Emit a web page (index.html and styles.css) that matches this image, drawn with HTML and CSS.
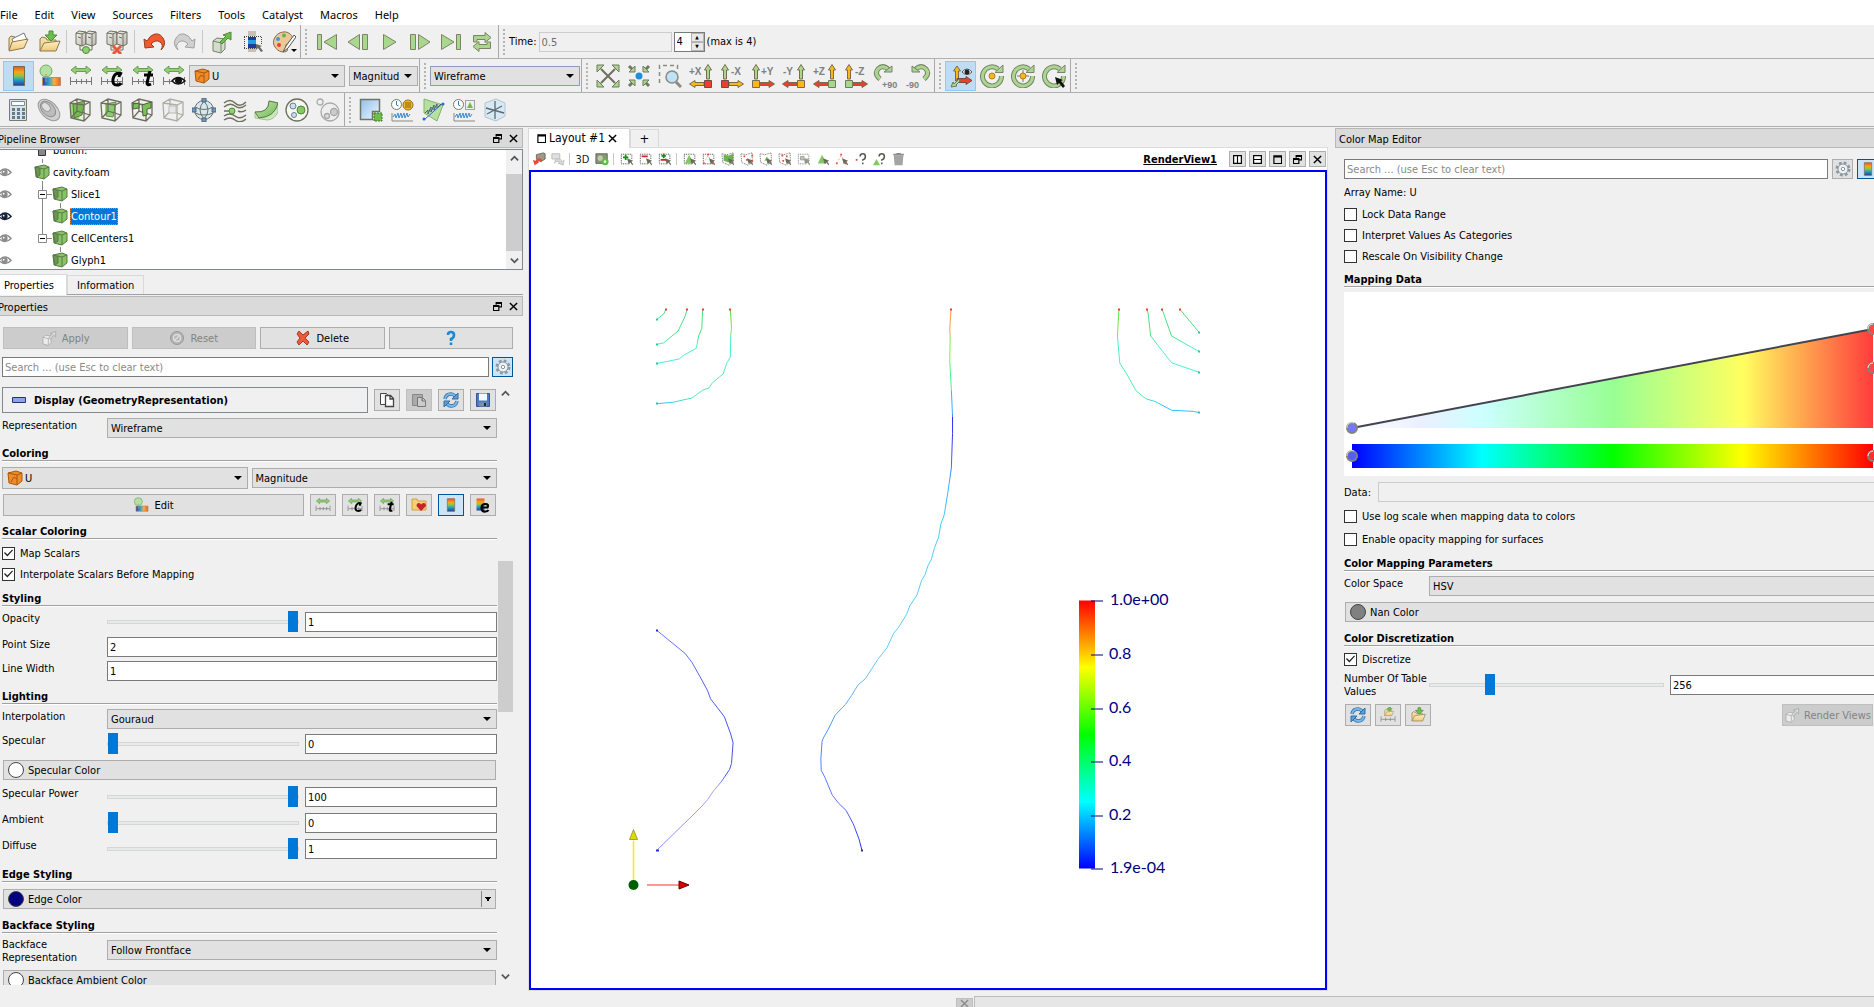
FILE: index.html
```
<!DOCTYPE html>
<html lang="en">
<head>
<meta charset="utf-8">
<title>ParaView</title>
<link rel="stylesheet" href="styles.css">
</head>
<body>
<svg class="sprite" aria-hidden="true">
  <defs>
    <linearGradient id="g-map" x1="0" y1="0" x2="0" y2="1"><stop offset="0" stop-color="#e8542a"/><stop offset=".3" stop-color="#f8a51f"/><stop offset=".5" stop-color="#8cc63f"/><stop offset=".7" stop-color="#1fa0c8"/><stop offset="1" stop-color="#2b3c8c"/></linearGradient>
    <linearGradient id="g-maph"><stop offset="0" stop-color="#2b3c9c"/><stop offset=".35" stop-color="#2f9fd0"/><stop offset=".65" stop-color="#f8b03c"/><stop offset="1" stop-color="#e8602a"/></linearGradient>
    <linearGradient id="g-green" x1="0" y1="0" x2="1" y2="1"><stop offset="0" stop-color="#c4e8b4"/><stop offset="1" stop-color="#72b850"/></linearGradient>
    <linearGradient id="g-blue" x1="0" y1="0" x2="1" y2="1"><stop offset="0" stop-color="#8fc0e8"/><stop offset="1" stop-color="#f0f8ff"/></linearGradient>
    <linearGradient id="g-folder" x1="0" y1="0" x2="0" y2="1"><stop offset="0" stop-color="#fff0c8"/><stop offset="1" stop-color="#f0c878"/></linearGradient>
    <linearGradient id="g-grey" x1="0" y1="0" x2="1" y2="1"><stop offset="0" stop-color="#f4f4f0"/><stop offset="1" stop-color="#b8b8b0"/></linearGradient>
  </defs>
  <symbol id="folder" viewBox="0 0 24 24"><path d="M3 20V8l2-2 4 1 1 2h9v4" fill="#f4dca0" stroke="#8c7850"/><path d="M6 9l12-6 3 7-12 7z" fill="#fff" stroke="#777"/><path d="M3 21l3-9 16-3-4 9z" fill="url(#g-folder)" stroke="#8c7850"/></symbol>
  <symbol id="folder-in" viewBox="0 0 24 24"><path d="M3 21V9l2-2 4 1 1 2h9v4" fill="#f4dca0" stroke="#8c7850"/><path d="M3 21l4-8 16-2-4 10z" fill="url(#g-folder)" stroke="#8c7850"/><path d="M12 1h4v4h4l-6 6-6-6h4z" fill="#6cc04a" stroke="#4e8a38"/></symbol>
  <symbol id="server" viewBox="0 0 24 24"><path d="M2 3l3-2 7 1v12l-4 2-6-2z" fill="url(#g-grey)" stroke="#6f6f5f"/><path d="M12 3l3-2 7 1v12l-4 2-6-2z" fill="url(#g-grey)" stroke="#6f6f5f"/><path d="M2 3l6 1 4-2M12 3l6 1 4-2M4 7l3 1M14 7l3 1M8 4v12M18 4v12M6 15v5h3M18 15v5h-3" fill="none" stroke="#6f6f5f"/></symbol>
  <symbol id="connect" viewBox="0 0 24 24"><use href="#server"/><circle cx="12" cy="20" r="3.500" fill="#8fd070" stroke="#4e8a38"/></symbol>
  <symbol id="disconnect" viewBox="0 0 24 24"><use href="#server"/><path d="M8 16l8 8M16 16l-8 8" stroke="#e8583a" stroke-width="3"/></symbol>
  <symbol id="undo" viewBox="0 0 24 24"><path d="M2 9l1 9 9-1-3-3q5-5 9-2 4 3 1 8 5-5 3-10-3-7-9-6-5 1-8 7z" fill="#f05a30" stroke="#9c3c1c"/></symbol>
  <symbol id="redo" viewBox="0 0 24 24"><path d="M22 9l-1 9-9-1 3-3q-5-5-9-2-4 3-1 8-5-5-3-10 3-7 9-6 5 1 8 7z" fill="#d0d0d0" stroke="#a0a0a0"/></symbol>
  <symbol id="extract" viewBox="0 0 24 24"><path d="M3 11l4-3 8 1v10l-4 4-8-2z" fill="#d4dccc" stroke="#76806a"/><path d="M3 11l8 2 4-4M11 13v9" fill="none" stroke="#76806a"/><path d="M10 12l6-6-3-1 8-3v8l-3-2-6 6z" fill="#6cc04a" stroke="#4e8a38"/></symbol>
  <symbol id="extract-grey" viewBox="0 0 24 24"><path d="M3 11l4-3 8 1v10l-4 4-8-2z" fill="#ececec" stroke="#a0a0a0"/><path d="M3 11l8 2 4-4M11 13v9" fill="none" stroke="#a0a0a0"/><path d="M12 11l5-5-3-1 8-3v8l-3-2-5 6z" fill="#dadada" stroke="#a0a0a0"/></symbol>
  <symbol id="reset-session" viewBox="0 0 24 24"><path d="M7 1h8v5H7z" fill="#c8c0b8"/><path d="M7 7h8v11H7z" fill="#1c3c9c"/><path d="M7 10h8v4H7z" fill="#20a0e0"/><path d="M7 18h8v4H7z" fill="#c8c0b8"/><path d="M3 6.500h17M3 18.500h12M3.500 7v12M20.500 7v7" stroke="#444" stroke-dasharray="1 1" fill="none"/><path d="M15 14l6 2-2 1 3 4-2 1-3-4-2 2z" fill="#6a6a60"/></symbol>
  <symbol id="palette" viewBox="0 0 24 24"><path d="M11 2C3 3-1 12 3 17c3 5 9 6 12 4 2-2-2-3-1-6s7-1 7-5-4-9-10-8z" fill="#ecc898" stroke="#8a6c4c"/><circle cx="6" cy="9" r="2" fill="#3a9ae0"/><circle cx="12" cy="5.500" r="2" fill="#5cb848"/><circle cx="7" cy="15" r="2" fill="#e84030"/><path d="M22 5l-8 11-3 6 5-4 8-11z" fill="#fff" stroke="#555"/></symbol>
  <symbol id="first" viewBox="0 0 24 24"><path d="M2.500 4.500h4v15h-4zM21.500 4.500v15L9 12z" fill="#a9d78d" stroke="#7d8266"/></symbol>
  <symbol id="prev" viewBox="0 0 24 24"><path d="M13.500 4.500v15L2 12zM16.500 4.500h5v15h-5z" fill="#a9d78d" stroke="#7d8266"/></symbol>
  <symbol id="play" viewBox="0 0 24 24"><path d="M6.500 4.500v15L19 12z" fill="#a9d78d" stroke="#7d8266"/></symbol>
  <symbol id="next" viewBox="0 0 24 24"><path d="M10.500 4.500v15L22 12zM2.500 4.500h5v15h-5z" fill="#a9d78d" stroke="#7d8266"/></symbol>
  <symbol id="last" viewBox="0 0 24 24"><path d="M17.500 4.500h4v15h-4zM2.500 4.500v15L15 12z" fill="#a9d78d" stroke="#7d8266"/></symbol>
  <symbol id="loop" viewBox="0 0 24 24"><path d="M3.500 12V5.500H15v-3l6 5-6 5v-3H7V12zM20.500 12v6.500H9v3l-6-5 6-5v3h8V12z" fill="#a9d78d" stroke="#7d8266"/></symbol>
  <symbol id="colorbar" viewBox="0 0 24 24"><path d="M6.500 2.500h11v19h-11z" fill="url(#g-map)" stroke="#7a6a4a"/></symbol>
  <symbol id="editmap" viewBox="0 0 24 24"><path d="M4.500 13.500h18v8h-18z" fill="url(#g-maph)" stroke="#b09070"/><circle cx="8" cy="7" r="6" fill="#b4e0a0" stroke="#78a868"/><path d="M8 10v8" stroke="#999"/></symbol>
  <symbol id="rescale" viewBox="0 0 24 24"><path d="M2 6l5-4v2.500h10V2l5 4-5 4V7.500H7V10z" fill="#8fd070" stroke="#6f9a58"/><path d="M1.500 13v8M22.500 13v8M2 17.500h20M7.500 15v5M12.500 15v5M17.500 15v5" stroke="#777" fill="none"/></symbol>
  <symbol id="letter-c" viewBox="0 0 24 24"><path d="M22 10q-7-3-9 5-1 6 4 6 3 0 4-2M20 9l-1 4" fill="none" stroke="#000" stroke-width="3"/></symbol>
  <symbol id="rescale-c" viewBox="0 0 24 24"><use href="#rescale"/><use href="#letter-c"/></symbol>
  <symbol id="rescale-t" viewBox="0 0 24 24"><use href="#rescale"/><path d="M19 7l-3 12q0 3 4 1M13 11h9" fill="none" stroke="#000" stroke-width="3"/></symbol>
  <symbol id="rescale-eye" viewBox="0 0 24 24"><use href="#rescale"/><path d="M10 17q6-7 13 0-7 6-13 0z" fill="#fff" stroke="#111" stroke-width="1.500"/><circle cx="16.500" cy="16.500" r="3.500" fill="#111"/></symbol>
  <symbol id="cube-orange" viewBox="0 0 16 16"><path d="M1 3l8-2 6 2v8l-5 4-8-2z" fill="#f08c28" stroke="#a85810"/><path d="M1 3l9 2 5-2M10 5v10M4 12l3-5M7 7l3 2" fill="none" stroke="#a85810"/></symbol>
  <symbol id="cube" viewBox="0 0 16 16"><path d="M1 3l9-2 5 2v8l-5 4-8-2z" fill="#86c464" stroke="#5c7848"/><path d="M1 3l9 2 5-2M10 5v10M1 3l2 10 3-2V4" fill="none" stroke="#5c7848"/><path d="M1 3l5 1v7l-3 2z" fill="#587848" opacity=".6"/></symbol>
  <symbol id="calc" viewBox="0 0 24 24"><path d="M3.500 1.500h17v21h-17z" fill="#cfe4f4" stroke="#7a7a6a"/><path d="M5.500 3.500h13v4h-13z" fill="#f8fcff" stroke="#8a8a7a"/><path d="M6 10h3v3H6zM11 10h3v3h-3zM16 10h3v3h-3zM6 14h3v3H6zM11 14h3v3h-3zM16 14h3v3h-3zM6 18h3v3H6zM11 18h3v3h-3zM16 18h3v3h-3z" fill="#6e7a82"/></symbol>
  <symbol id="contour" viewBox="0 0 24 24"><ellipse cx="12" cy="12" rx="13" ry="8" transform="rotate(45 12 12)" fill="#d0d0d0" stroke="#999"/><ellipse cx="11" cy="11" rx="9" ry="6" transform="rotate(45 11 11)" fill="#bcbcbc" stroke="#909090"/><ellipse cx="9" cy="9" rx="5" ry="3.500" transform="rotate(45 9 9)" fill="#e0e0e0" stroke="#999"/></symbol>
  <symbol id="wire" viewBox="0 0 24 24"><path d="M2 5l7-4 13 3v13l-6 6-13-3zM2 5l14 2 6-3M16 7v16M9 1v12l13 4M9 13l-6 7" fill="none" stroke="#6f6f5f" stroke-width="1.300"/></symbol>
  <symbol id="clip" viewBox="0 0 24 24"><path d="M2 5l14 2v16L3 20z" fill="#e6f2e0"/><path d="M2 5l11 1-2 16-8-2z" fill="#a4d488"/><path d="M5 6l12-3-3 14-8 3z" fill="#74b850" stroke="#4e8038"/><use href="#wire"/></symbol>
  <symbol id="slice" viewBox="0 0 24 24"><path d="M2 5l14 2v16L3 20z" fill="#eef4ea"/><path d="M7 6l10-2-3 15-7-1z" fill="#8ccc6c" stroke="#5c9844"/><use href="#wire"/></symbol>
  <symbol id="threshold" viewBox="0 0 24 24"><use href="#wire"/><path d="M3 6l6-1v5l-6 1zM12 7l9-3v6l-4 1v6l-4 1z" fill="#7cc05c" stroke="#4e6038"/></symbol>
  <symbol id="subset" viewBox="0 0 24 24"><g opacity=".5"><use href="#wire"/><path d="M8 8h7v7H8z" fill="#ddd" stroke="#888"/></g></symbol>
  <symbol id="glyph" viewBox="0 0 24 24"><circle cx="12" cy="12" r="9.500" fill="#d4e8f4" stroke="#6f6f5f"/><path d="M3 9q9 5 18 0M3 15q9 4 18 0M12 3q-8 9 0 18q8-9 0-18" fill="none" stroke="#6f6f5f"/><path d="M10 0h4v4h-4zM10 20h4v4h-4zM0 10h4v4H0zM20 10h4v4h-4z" fill="#6a9ac0" stroke="#51657a"/></symbol>
  <symbol id="stream" viewBox="0 0 24 24"><path d="M1 5q6-5 11 0t11-1M1 9q6-5 11-1t11-1M1 18q6-4 11 0t11-1M1 22q6-4 11 0t11-1M1 13h5M15 13q4 2 8-1" fill="none" stroke="#6f6f5f" stroke-width="1.500"/><circle cx="9" cy="13" r="3" fill="#8fd070" stroke="#4e8a38"/></symbol>
  <symbol id="warp" viewBox="0 0 24 24"><path d="M1 20V14q14 1 14-11l9 2v9q-4 8-11 8z" fill="#c8e8bc" stroke="#a0c490"/><path d="M1 14q14 1 14-11l9 2q-3 14-19 15z" fill="url(#g-green)" stroke="#5c7848"/></symbol>
  <symbol id="group" viewBox="0 0 24 24"><circle cx="12" cy="12" r="11" fill="#f4f8f0" stroke="#6f6f5f" stroke-width="1.300"/><circle cx="8" cy="8" r="3" fill="#c8e0f4" stroke="#6f7f8f"/><circle cx="16" cy="12" r="4" fill="#84c864" stroke="#4e8a38"/><circle cx="9" cy="17" r="2.500" fill="#c8e0f4" stroke="#6f7f8f"/></symbol>
  <symbol id="level" viewBox="0 0 24 24"><g fill="#eee" stroke="#a8a8a8" stroke-width="1.300"><circle cx="4" cy="4" r="3"/><circle cx="14" cy="14" r="9"/><circle cx="18" cy="14" r="3.500" fill="#ccc"/><circle cx="11" cy="18" r="2.500" fill="#ddd"/></g></symbol>
  <symbol id="block" viewBox="0 0 24 24"><path d="M1.500 1.500h19v12h-7v8h-12z" fill="url(#g-blue)" stroke="#6f7468" stroke-width="1.500"/><path d="M15 15h8v8h-8z" fill="#6cc04a" stroke="#3c7028" stroke-dasharray="2 1"/></symbol>
  <symbol id="wave" viewBox="0 0 24 24"><path d="M2 15v8h21" fill="none" stroke="#8a8a80"/><path d="M3 19l2-3 1 4 2-5 1 5 2-5 1 5 2-5 1 5 2-5 1 4 2-3" fill="none" stroke="#3a8ad0"/><circle cx="6.500" cy="6.500" r="5" fill="#fff" stroke="#7a7a60"/><path d="M6.500 3v4l2 1" fill="none" stroke="#3a7ab0"/></symbol>
  <symbol id="plot-time" viewBox="0 0 24 24"><use href="#wave"/><circle cx="18" cy="7" r="5" fill="#f4b820" stroke="#907020"/><path d="M15 5h6M15 7h6M15 9h6" stroke="#806010"/></symbol>
  <symbol id="plot-line" viewBox="0 0 24 24"><path d="M3 1l19 6-6 16-13-8z" fill="#b4e0a0" stroke="#84b070"/><path d="M3 22L22 5" stroke="#3a6ab0"/><path d="M4 15l3-3v4l3-7v5l3-7v5l3-6v4l4-4" fill="none" stroke="#46607a"/><circle cx="3" cy="21" r="1.500" fill="#2a6ad0"/><circle cx="22" cy="6" r="1.500" fill="#2a6ad0"/></symbol>
  <symbol id="plot-sel" viewBox="0 0 24 24"><use href="#wave"/><path d="M13.500 2.500h9v9h-9z" fill="none" stroke="#555" stroke-dasharray="1 1"/><path d="M18 4l3 6h-6z" fill="#6cc04a"/></symbol>
  <symbol id="probe" viewBox="0 0 24 24"><path d="M2 5l11-4 9 4v13l-9 5-11-4z" fill="#d8e8f4" stroke="#b0c4d4"/><path d="M12 3v18M3 10l18 5M4 16l15-8" stroke="#5a6a70" stroke-width="1.300"/></symbol>
  <symbol id="zoom-data" viewBox="0 0 24 24"><path d="M5 5l14 14M19 5L5 19" stroke="#6f6f5f" stroke-width="2"/><path d="M1 1h7L1 8zM23 1h-7l7 7zM1 23h7l-7-7zM23 23h-7l7-7z" fill="#a9d78d" stroke="#6f7a5f"/></symbol>
  <symbol id="zoom-closest" viewBox="0 0 24 24"><path d="M2 2l4 4M22 2l-4 4M2 22l4-4M22 22l-4-4" stroke="#6f7a5f" stroke-width="3"/><path d="M8 2v6H2zM16 2v6h6zM8 22v-6H2zM16 22v-6h6z" fill="#a9d78d" stroke="#6f7a5f"/><circle cx="12" cy="12" r="3.500" fill="#1e90d8"/></symbol>
  <symbol id="zoom-box" viewBox="0 0 24 24"><path d="M1.500 19V1.500h18V6" fill="none" stroke="#8a8a80" stroke-width="1.500" stroke-dasharray="4 3"/><path d="M18 18l5 5" stroke="#8a8a80" stroke-width="3"/><circle cx="14" cy="13" r="6" fill="#bfe2f8" stroke="#8a8a80" stroke-width="1.500"/></symbol>
  <symbol id="arm-up" viewBox="0 0 8 16"><path d="M2.500 15V6H.5L4 .5 7.500 6h-2v9z" stroke="#7a6a50"/></symbol>
  <symbol id="arm-left" viewBox="0 0 16 8"><path d="M15 2.500H6v-2L.5 4 6 7.500v-2h9z" stroke="#7a6a50"/></symbol>
  <symbol id="arm-right" viewBox="0 0 16 8"><path d="M1 2.500h9v-2L15.500 4 10 7.500v-2H1z" stroke="#7a6a50"/></symbol>
  <symbol id="rot-cw" viewBox="0 0 24 24"><path d="M8 15q-6-5-2-10 5-5 11 1" fill="none" stroke="#7a826a" stroke-width="5"/><path d="M8 15q-6-5-2-10 5-5 11 1" fill="none" stroke="#a9d78d" stroke-width="3"/><path d="M12 8h8V2z" fill="#a9d78d" stroke="#7a826a"/></symbol>
  <symbol id="axes-eye" viewBox="0 0 24 24"><path d="M6.500 17V7h-2L8 2l3.500 5h-2v10z" fill="#f8b81c" stroke="#7a6a50"/><path d="M8 14.500h9v-2l6 4-6 4v-2H8z" fill="#e8402c" stroke="#7a4a40"/><path d="M10 15l-5 5-1-2-2 5 6-1-1-1 4-4z" fill="#a9d78d" stroke="#6f7a5f"/><path d="M13 8q5-6 10 0-5 5-10 0z" fill="#fff" stroke="#555"/><circle cx="18" cy="8" r="2.500" fill="#222"/></symbol>
  <symbol id="ring" viewBox="0 0 24 24"><path d="M18 5A9.500 9.500 0 1 0 21.500 12" fill="none" stroke="#7a826a" stroke-width="5"/><path d="M18 5A9.500 9.500 0 1 0 21.500 12" fill="none" stroke="#a9d78d" stroke-width="3"/><path d="M15 8.500h8V1z" fill="#a9d78d" stroke="#7a826a"/></symbol>
  <symbol id="center-reset" viewBox="0 0 24 24"><use href="#ring"/><circle cx="12" cy="12" r="3" fill="#f8b81c" stroke="#a88020"/></symbol>
  <symbol id="center-show" viewBox="0 0 24 24"><use href="#ring"/><path d="M12 6v12M6 12h12" stroke="#777"/><circle cx="12" cy="12" r="3" fill="#f8b81c" stroke="#a88020"/></symbol>
  <symbol id="center-pick" viewBox="0 0 24 24"><use href="#ring"/><path d="M13 13l8 3-2 1 4 5-2 2-4-5-2 2z" fill="#111"/></symbol>
  <symbol id="eye" viewBox="0 0 16 12"><path d="M1 6q7-8 14 0-7 7-14 0z" fill="#fff" stroke="currentColor" stroke-width="1.500"/><circle cx="7.500" cy="6" r="3.500" fill="currentColor"/><circle cx="6.500" cy="5" r="1" fill="#fff"/></symbol>
  <symbol id="float" viewBox="0 0 10 10"><path d="M3.500 3V.5h6v5H7M3.500 1.500h6M.5 4h6v5.500h-6zM.5 5h6" fill="none" stroke="#000" stroke-width="1.300"/></symbol>
  <symbol id="close" viewBox="0 0 10 10"><path d="M1 1l8 8M9 1L1 9" stroke="#000" stroke-width="1.600"/></symbol>
  <symbol id="win" viewBox="0 0 10 10"><path d="M1 1h8.500v8.500H1zM1 2h8" fill="none" stroke="#000" stroke-width="1.300"/></symbol>
  <symbol id="split-h" viewBox="0 0 10 10"><path d="M.7.7h8.600v8.600H.7zM5 1v8" fill="#fff" stroke="#000" stroke-width="1.300"/></symbol>
  <symbol id="split-v" viewBox="0 0 10 10"><path d="M.7.7h8.600v8.600H.7zM1 5h8" fill="#fff" stroke="#000" stroke-width="1.300"/></symbol>
  <symbol id="up" viewBox="0 0 10 10"><path d="M1 7l4-4 4 4" fill="none" stroke="#555" stroke-width="2"/></symbol>
  <symbol id="down" viewBox="0 0 10 10"><path d="M1 3l4 4 4-4" fill="none" stroke="#555" stroke-width="2"/></symbol>
  <symbol id="gear" viewBox="0 0 16 16"><circle cx="8" cy="8" r="6" fill="none" stroke="#8d99a2" stroke-width="3" stroke-dasharray="2.700 2"/><circle cx="8" cy="8" r="5" fill="#eef2f4" stroke="#8a969e"/><circle cx="8" cy="8" r="1.700" fill="#fff" stroke="#8a969e"/></symbol>
  <symbol id="no" viewBox="0 0 16 16"><circle cx="8" cy="8" r="6.500" fill="#b4b4b4" stroke="#989898"/><circle cx="8" cy="8" r="3.500" fill="none" stroke="#ddd" stroke-width="1.500"/><path d="M5 11l6-6" stroke="#ddd" stroke-width="1.500"/></symbol>
  <symbol id="del" viewBox="0 0 16 16"><path d="M2 4l2-3 4 4 5-4 1 3-4 4 4 4-2 3-4-4-4 4-2-3 3-4z" fill="#f0583a" stroke="#a83820"/></symbol>
  <symbol id="help" viewBox="0 0 16 16"><path d="M5 5q0-3 3-3t3 3-3 4v2M8 12.500v2.500" fill="none" stroke="#1e88d0" stroke-width="2.600"/></symbol>
  <symbol id="copy" viewBox="0 0 16 16"><path d="M1.500 1.500h6l2 3v8h-8z" fill="#fff" stroke="#444"/><path d="M6.500 3.500h5l3 3v8h-8zM11 4v3h3" fill="#fff" stroke="#444" stroke-width="1.300"/></symbol>
  <symbol id="paste" viewBox="0 0 16 16"><path d="M1.500 2.500h10v11h-10z" fill="#aaa" stroke="#888"/><path d="M6.500 5.500h5l3 3v6h-8zM11 6v3h3" fill="#ccc" stroke="#777"/></symbol>
  <symbol id="refresh" viewBox="0 0 16 16"><path d="M2 7q1-5 6-5 2 0 4 2M14 9q-1 5-6 5-2 0-4-2" fill="none" stroke="#2c6ca8" stroke-width="3.500"/><path d="M2 7q1-5 6-5 2 0 4 2M14 9q-1 5-6 5-2 0-4-2" fill="none" stroke="#78b8e8" stroke-width="2"/><path d="M15 1v6H9zM1 15V9h6z" fill="#5ca0d8" stroke="#2c6ca8"/></symbol>
  <symbol id="save" viewBox="0 0 16 16"><path d="M1.500 1.500h13v13h-13z" fill="#4a7cc0" stroke="#34568c"/><path d="M4 1.500h8v7H4z" fill="#f4f8ff"/><path d="M4 10.500h8v4H4z" fill="#7890b0"/><path d="M9 11h2v3H9z" fill="#223"/></symbol>
  <symbol id="fav" viewBox="0 0 16 16"><path d="M1 13V2h5l1 2h8v9z" fill="#f4d070" stroke="#d0a040"/><path d="M10 14L5.500 9q0-3 2.500-3 1.500 0 2 1.500 1-1.500 2.500-1.500 2.500 0 2.500 3z" fill="#c8202c"/></symbol>
  <symbol id="map-e" viewBox="0 0 16 16"><path d="M1.500 1.500h8v12h-8z" fill="url(#g-map)"/><path d="M7 10.500h5.500q1.500-3.500-2-3.500-4 0-4 4t4 3.500q2 0 3-1.500" fill="none" stroke="#000" stroke-width="2.200"/></symbol>
  <symbol id="dot-sel" viewBox="0 0 16 16"><path d="M1.500 2.500h12M1.500 13.500h9M1.500 3v10M13.500 3v6" fill="none" stroke="#333" stroke-dasharray="1 1"/></symbol>
  <symbol id="arrow" viewBox="0 0 16 16"><path d="M8 7l7 3-2 1 2 3-1 1-2-3-2 2z" fill="#6a6a5a"/></symbol>
  <symbol id="cam-undo" viewBox="0 0 16 16"><path d="M5 3l8-2 2 1v6l-5 3-5-3z" fill="#a09888" stroke="#6a6258"/><path d="M1 9l2 6 5-3-1-1q3-2 4 1 1-5-3-5-3 0-4 3z" fill="#e84a34"/></symbol>
  <symbol id="cam-redo" viewBox="0 0 16 16"><g opacity=".6"><path d="M1 2h9v6H1z" fill="#ccc" stroke="#888"/><path d="M15 9l-1 6-6-2 2-1q-4-3-6 1 0-6 5-5 3 0 4 3z" fill="#bbb" stroke="#888" stroke-width=".7"/></g></symbol>
  <symbol id="camera" viewBox="0 0 16 16"><path d="M1 2h13v11H1z" fill="#8a9478" stroke="#5a6450"/><circle cx="6" cy="7" r="3" fill="#c0ccb0"/><circle cx="11.500" cy="11" r="4" fill="#5cc040"/><circle cx="11.500" cy="11" r="1.500" fill="#e8ffe0"/></symbol>
  <symbol id="tri" viewBox="0 0 16 16"><path d="M7 3l5 10H2z" fill="#84c864"/></symbol>
  <symbol id="dots" viewBox="0 0 16 16"><path d="M2 13L7 4l5 9" fill="none" stroke="#f0a090" stroke-dasharray="2 2"/><path d="M6 2h2v2H6zM1 12h2v2H1zM11 12h2v2h-2z" fill="#f04830"/></symbol>
  <symbol id="bowl" viewBox="0 0 16 16"><path d="M1 2l6 1 7-2v11l-5 3-7-3z" fill="none" stroke="#555" stroke-dasharray="1 1"/></symbol>
  <symbol id="plus-sel" viewBox="0 0 16 16"><use href="#dot-sel"/><path d="M6.500 3v6M3.500 6h6" stroke="#109010" stroke-width="2"/><use href="#arrow"/></symbol>
  <symbol id="minus-sel" viewBox="0 0 16 16"><use href="#dot-sel"/><path d="M3 5h7" stroke="#e02020" stroke-width="2"/><use href="#arrow"/></symbol>
  <symbol id="toggle-sel" viewBox="0 0 16 16"><use href="#dot-sel"/><path d="M6.500 2v5M4 4.500h5" stroke="#109010" stroke-width="2"/><path d="M3 9h7" stroke="#e02020" stroke-width="2"/><use href="#arrow"/></symbol>
  <symbol id="sel-cell" viewBox="0 0 16 16"><use href="#dot-sel"/><use href="#tri"/><use href="#arrow"/></symbol>
  <symbol id="sel-pt" viewBox="0 0 16 16"><use href="#dot-sel"/><use href="#dots"/><use href="#arrow"/></symbol>
  <symbol id="fr-cell" viewBox="0 0 16 16"><path d="M3 3l6 1 5-2v8l-5 2-6-2z" fill="#6cb44c"/><use href="#bowl"/><use href="#arrow"/></symbol>
  <symbol id="fr-pt" viewBox="0 0 16 16"><use href="#bowl"/><path d="M4 4h2v2H4zM7 8h2v2H7zM13 3h2v2h-2zM13 9h2v2h-2z" fill="#f04830"/><use href="#arrow"/></symbol>
  <symbol id="poly-cell" viewBox="0 0 16 16"><use href="#bowl"/><path d="M9 5l4 5H6z" fill="#84c864"/><use href="#arrow"/></symbol>
  <symbol id="poly-pt" viewBox="0 0 16 16"><use href="#bowl"/><path d="M4 3h2v2H4zM9 4h2v2H9zM5 9h2v2H5z" fill="#f04830"/><use href="#arrow"/></symbol>
  <symbol id="sel-block" viewBox="0 0 16 16"><g opacity=".7"><use href="#dot-sel"/><path d="M4 5h4v4H4zM9 8h4v4H9z" fill="#a0b090" stroke="#777"/><use href="#arrow"/></g></symbol>
  <symbol id="int-cell" viewBox="0 0 16 16"><use href="#tri"/><use href="#arrow"/></symbol>
  <symbol id="int-pt" viewBox="0 0 16 16"><use href="#dots"/><use href="#arrow"/></symbol>
  <symbol id="q" viewBox="0 0 16 16"><path d="M7 5q0-3 3-3t3 3-3 4v1M10 12v2" fill="none" stroke="#5a5a50" stroke-width="1.800"/></symbol>
  <symbol id="hov-pt" viewBox="0 0 16 16"><path d="M2 8h2v2H2z" fill="#f04830"/><use href="#q"/></symbol>
  <symbol id="hov-cell" viewBox="0 0 16 16"><path d="M4 8l4 7H0z" fill="#84c864"/><use href="#q"/></symbol>
  <symbol id="trash" viewBox="0 0 16 16"><path d="M2 4h11l-1 11H3z" fill="#a4a4a4"/><path d="M1.500 2h12v2h-12zM5 1h5v1H5z" fill="#8c8c8c"/></symbol>
  <symbol id="minus" viewBox="0 0 14 8"><path d="M.5 1.500h13v5H.5z" fill="#8ca4e8" stroke="#24346c"/></symbol>
</svg>

<nav class="menubar" aria-label="Main menu">
  <a href="#">File</a><a href="#">Edit</a><a href="#">View</a><a href="#">Sources</a><a href="#">Filters</a><a href="#">Tools</a><a href="#">Catalyst</a><a href="#">Macros</a><a href="#">Help</a>
</nav>

<header class="toolbars">
  <div class="toolrow">
    <div class="group lead">
      <button class="tool" aria-label="Open"><svg><use href="#folder"/></svg></button>
      <button class="tool" aria-label="Save data"><svg><use href="#folder-in"/></svg></button>
      <span class="sep"></span>
      <button class="tool" aria-label="Connect"><svg><use href="#connect"/></svg></button>
      <button class="tool" aria-label="Disconnect"><svg><use href="#disconnect"/></svg></button>
      <span class="sep"></span>
      <button class="tool" aria-label="Undo"><svg><use href="#undo"/></svg></button>
      <button class="tool" aria-label="Redo" disabled><svg><use href="#redo"/></svg></button>
      <span class="sep"></span>
      <button class="tool" aria-label="Auto apply"><svg><use href="#extract"/></svg></button>
      <button class="tool" aria-label="Find data"><svg><use href="#reset-session"/></svg></button>
      <button class="tool menu" aria-label="Load palette"><svg><use href="#palette"/></svg></button>
    </div>
    <div class="group"><span class="grip"></span>
      <button class="tool" aria-label="First frame"><svg><use href="#first"/></svg></button>
      <button class="tool" aria-label="Previous frame"><svg><use href="#prev"/></svg></button>
      <button class="tool" aria-label="Play"><svg><use href="#play"/></svg></button>
      <button class="tool" aria-label="Next frame"><svg><use href="#next"/></svg></button>
      <button class="tool" aria-label="Last frame"><svg><use href="#last"/></svg></button>
      <button class="tool" aria-label="Loop"><svg><use href="#loop"/></svg></button>
    </div>
    <div class="group open"><span class="grip"></span>
      <label for="time">Time:</label><input id="time" class="field time" value="0.5" disabled>
      <span class="spin"><input aria-label="Time step" value="4"><button aria-label="Step up">▲</button><button aria-label="Step down">▼</button></span>
      <span>(max is 4)</span>
    </div>
  </div>
  <div class="toolrow">
    <div class="group lead wide">
      <button class="tool on" aria-label="Show color bar"><svg><use href="#colorbar"/></svg></button>
      <button class="tool" aria-label="Edit color map"><svg><use href="#editmap"/></svg></button>
      <button class="tool" aria-label="Rescale to data range"><svg><use href="#rescale"/></svg></button>
      <button class="tool" aria-label="Rescale to custom range"><svg><use href="#rescale-c"/></svg></button>
      <button class="tool" aria-label="Rescale over time"><svg><use href="#rescale-t"/></svg></button>
      <button class="tool" aria-label="Rescale to visible range"><svg><use href="#rescale-eye"/></svg></button>
      <span class="combo array"><svg class="lead-ico"><use href="#cube-orange"/></svg><select aria-label="Array"><option>U</option></select></span>
      <span class="combo comp"><select aria-label="Component"><option>Magnitude</option></select></span>
    </div>
    <div class="group"><span class="grip"></span>
      <span class="combo rep focus"><select aria-label="Representation"><option>Wireframe</option></select></span>
    </div>
    <div class="group"><span class="grip"></span>
      <button class="tool" aria-label="Reset camera"><svg><use href="#zoom-data"/></svg></button>
      <button class="tool" aria-label="Zoom to data"><svg><use href="#zoom-closest"/></svg></button>
      <button class="tool" aria-label="Zoom to box"><svg><use href="#zoom-box"/></svg></button>
      <button class="tool" aria-label="View +X"><svg viewBox="0 0 24 24"><text x="0" y="11">+X</text><use href="#arm-up" x="15" y="0" width="8" height="16" fill="#a9d78d"/><use href="#arm-left" x="0" y="16" width="16" height="8" fill="#f8b81c"/><path d="M15.500 16.500h7v7h-7z" fill="#e8402c" stroke="#7a4a40"/></svg></button>
      <button class="tool" aria-label="View -X"><svg viewBox="0 0 24 24"><text x="11" y="11">-X</text><use href="#arm-up" x="1" y="0" width="8" height="16" fill="#a9d78d"/><use href="#arm-right" x="8" y="16" width="16" height="8" fill="#f8b81c"/><path d="M1.500 16.500h7v7h-7z" fill="#e8402c" stroke="#7a4a40"/></svg></button>
      <button class="tool" aria-label="View +Y"><svg viewBox="0 0 24 24"><text x="10" y="11">+Y</text><use href="#arm-up" x="1" y="0" width="8" height="16" fill="#a9d78d"/><use href="#arm-right" x="8" y="16" width="16" height="8" fill="#e8402c"/><path d="M1.500 16.500h7v7h-7z" fill="#f8b81c" stroke="#7a6a50"/></svg></button>
      <button class="tool" aria-label="View -Y"><svg viewBox="0 0 24 24"><text x="1" y="11">-Y</text><use href="#arm-up" x="15" y="0" width="8" height="16" fill="#a9d78d"/><use href="#arm-left" x="0" y="16" width="16" height="8" fill="#e8402c"/><path d="M15.500 16.500h7v7h-7z" fill="#f8b81c" stroke="#7a6a50"/></svg></button>
      <button class="tool" aria-label="View +Z"><svg viewBox="0 0 24 24"><text x="0" y="11">+Z</text><use href="#arm-up" x="15" y="0" width="8" height="16" fill="#f8b81c"/><use href="#arm-left" x="0" y="16" width="16" height="8" fill="#e8402c"/><path d="M15.500 16.500h7v7h-7z" fill="#a9d78d" stroke="#6f7a5f"/></svg></button>
      <button class="tool" aria-label="View -Z"><svg viewBox="0 0 24 24"><text x="11" y="11">-Z</text><use href="#arm-up" x="1" y="0" width="8" height="16" fill="#f8b81c"/><use href="#arm-right" x="8" y="16" width="16" height="8" fill="#e8402c"/><path d="M1.500 16.500h7v7h-7z" fill="#a9d78d" stroke="#6f7a5f"/></svg></button>
      <button class="tool" aria-label="Rotate 90 clockwise"><svg viewBox="0 0 24 24"><use href="#rot-cw" x="-3" y="0" width="24" height="24"/><text class="deg" x="7" y="24">+90</text></svg></button>
      <button class="tool" aria-label="Rotate 90 counterclockwise"><svg viewBox="0 0 24 24"><g transform="matrix(-1 0 0 1 26 0)"><use href="#rot-cw" width="24" height="24"/></g><text class="deg" x="0" y="24">-90</text></svg></button>
    </div>
    <div class="group"><span class="grip"></span>
      <button class="tool on" aria-label="Show orientation axes"><svg><use href="#axes-eye"/></svg></button>
      <button class="tool" aria-label="Reset center"><svg><use href="#center-reset"/></svg></button>
      <button class="tool" aria-label="Show center"><svg><use href="#center-show"/></svg></button>
      <button class="tool" aria-label="Pick center"><svg><use href="#center-pick"/></svg></button>
    </div>
    <div class="group open"><span class="grip"></span></div>
  </div>
  <div class="toolrow">
    <div class="group lead">
      <button class="tool" aria-label="Calculator"><svg><use href="#calc"/></svg></button>
      <button class="tool" aria-label="Contour" disabled><svg><use href="#contour"/></svg></button>
      <button class="tool" aria-label="Clip"><svg><use href="#clip"/></svg></button>
      <button class="tool" aria-label="Slice"><svg><use href="#slice"/></svg></button>
      <button class="tool" aria-label="Threshold"><svg><use href="#threshold"/></svg></button>
      <button class="tool" aria-label="Extract subset" disabled><svg><use href="#subset"/></svg></button>
      <button class="tool" aria-label="Glyph"><svg><use href="#glyph"/></svg></button>
      <button class="tool" aria-label="Stream tracer"><svg><use href="#stream"/></svg></button>
      <button class="tool" aria-label="Warp by vector"><svg><use href="#warp"/></svg></button>
      <button class="tool" aria-label="Group datasets"><svg><use href="#group"/></svg></button>
      <button class="tool" aria-label="Extract level" disabled><svg><use href="#level"/></svg></button>
    </div>
    <div class="group open"><span class="grip"></span>
      <button class="tool" aria-label="Extract block"><svg><use href="#block"/></svg></button>
      <button class="tool" aria-label="Plot global variables"><svg><use href="#plot-time"/></svg></button>
      <button class="tool" aria-label="Plot over line"><svg><use href="#plot-line"/></svg></button>
      <button class="tool" aria-label="Plot selection"><svg><use href="#plot-sel"/></svg></button>
      <button class="tool" aria-label="Probe"><svg><use href="#probe"/></svg></button>
    </div>
  </div>
</header>

<main class="workspace">
  <aside class="dock left">
    <h2 class="title">Pipeline Browser<span class="caps"><button aria-label="Float"><svg><use href="#float"/></svg></button><button aria-label="Close"><svg><use href="#close"/></svg></button></span></h2>
    <div class="tree">
      <ul>
        <li><svg class="eye"></svg><svg class="branch root" viewBox="0 0 20 22"><path d="M28.500 20v4" stroke="#888"/></svg><svg class="node" viewBox="0 0 16 16"><path d="M4.500 1.500h7v12h-7z" fill="#888" stroke="#333"/></svg><span>builtin:</span></li>
        <li><svg class="eye"><use href="#eye"/></svg><svg class="branch root"></svg><svg class="node"><use href="#cube"/></svg><span>cavity.foam</span></li>
        <li><svg class="eye"><use href="#eye"/></svg><svg class="branch" viewBox="0 0 38 22"><path d="M28.500-2v24M33 11.500h5" stroke="#888"/><path d="M24.500 7.500h8v8h-8z" fill="#fff" stroke="#888"/><path d="M26 11.500h5" stroke="#000"/></svg><svg class="node"><use href="#cube"/></svg><span>Slice1</span></li>
        <li><svg class="eye active"><use href="#eye"/></svg><svg class="branch" viewBox="0 0 38 22"><path d="M28.500 0v22M46.500-2v5" stroke="#888"/></svg><svg class="node"><use href="#cube"/></svg><span class="selected">Contour1</span></li>
        <li><svg class="eye"><use href="#eye"/></svg><svg class="branch" viewBox="0 0 38 22"><path d="M28.500 0v8M33 11.500h5" stroke="#888"/><path d="M24.500 7.500h8v8h-8z" fill="#fff" stroke="#888"/><path d="M26 11.500h5" stroke="#000"/></svg><svg class="node"><use href="#cube"/></svg><span>CellCenters1</span></li>
        <li><svg class="eye"><use href="#eye"/></svg><svg class="branch" viewBox="0 0 38 22"><path d="M46.500-2v5" stroke="#888"/></svg><svg class="node"><use href="#cube"/></svg><span>Glyph1</span></li>
      </ul>
      <div class="scroll tree-scroll"><svg><use href="#up"/></svg><i class="thumb"></i><svg><use href="#down"/></svg></div>
    </div>
    <div class="tabs"><button class="tab current">Properties</button><button class="tab">Information</button></div>
    <h2 class="title">Properties<span class="caps"><button aria-label="Float"><svg><use href="#float"/></svg></button><button aria-label="Close"><svg><use href="#close"/></svg></button></span></h2>
    <div class="actions">
      <button class="btn" disabled><svg><use href="#extract-grey"/></svg>Apply</button>
      <button class="btn" disabled><svg><use href="#no"/></svg>Reset</button>
      <button class="btn"><svg><use href="#del"/></svg>Delete</button>
      <button class="btn" aria-label="Help"><svg><use href="#help"/></svg></button>
    </div>
    <div class="searchrow">
      <input class="field" aria-label="Search properties" placeholder="Search ... (use Esc to clear text)">
      <button class="mini checked" aria-label="Advanced properties"><svg><use href="#gear"/></svg></button>
    </div>
    <div class="props">
      <div class="form">
        <div class="line head">
          <button class="section"><svg><use href="#minus"/></svg>Display (GeometryRepresentation)</button>
          <button class="mini wide" aria-label="Copy"><svg><use href="#copy"/></svg></button>
          <button class="mini wide" aria-label="Paste" disabled><svg><use href="#paste"/></svg></button>
          <button class="mini wide" aria-label="Restore defaults"><svg><use href="#refresh"/></svg></button>
          <button class="mini wide" aria-label="Save as default"><svg><use href="#save"/></svg></button>
        </div>
        <div class="row"><label for="rep">Representation</label><span class="combo"><select id="rep"><option>Wireframe</option></select></span></div>
        <h3>Coloring</h3>
        <div class="line coloring">
          <span class="combo tall"><svg class="lead-ico"><use href="#cube-orange"/></svg><select aria-label="Color array"><option>U</option></select></span>
          <span class="combo"><select aria-label="Color component"><option>Magnitude</option></select></span>
        </div>
        <div class="line head">
          <button class="btn edit"><svg><use href="#editmap"/></svg>Edit</button>
          <button class="mini wide" aria-label="Rescale to data"><svg><use href="#rescale"/></svg></button>
          <button class="mini wide" aria-label="Rescale custom"><svg><use href="#rescale-c"/></svg></button>
          <button class="mini wide" aria-label="Rescale temporal"><svg><use href="#rescale-t"/></svg></button>
          <button class="mini wide" aria-label="Choose preset"><svg><use href="#fav"/></svg></button>
          <button class="mini wide checked" aria-label="Show color legend"><svg><use href="#colorbar"/></svg></button>
          <button class="mini wide" aria-label="Edit color legend"><svg><use href="#map-e"/></svg></button>
        </div>
        <h3>Scalar Coloring</h3>
        <div class="checks">
          <label class="check"><input type="checkbox" checked>Map Scalars</label>
          <label class="check"><input type="checkbox" checked>Interpolate Scalars Before Mapping</label>
        </div>
        <h3>Styling</h3>
        <div class="row slide"><label for="opacity">Opacity</label><input type="range" aria-label="Opacity slider" min="0" max="100" value="100"><input id="opacity" class="field" value="1"></div>
        <div class="row"><label for="psize">Point Size</label><input id="psize" class="field" value="2"></div>
        <div class="row"><label for="lwidth">Line Width</label><input id="lwidth" class="field" value="1"></div>
        <h3>Lighting</h3>
        <div class="row"><label for="interp">Interpolation</label><span class="combo"><select id="interp"><option>Gouraud</option></select></span></div>
        <div class="row slide"><label for="spec">Specular</label><input type="range" aria-label="Specular slider" min="0" max="100" value="0"><input id="spec" class="field" value="0"></div>
        <button class="btn color"><i class="swatch"></i>Specular Color</button>
        <div class="row slide"><label for="power">Specular Power</label><input type="range" aria-label="Specular power slider" min="0" max="100" value="100"><input id="power" class="field" value="100"></div>
        <div class="row slide"><label for="amb">Ambient</label><input type="range" aria-label="Ambient slider" min="0" max="100" value="0"><input id="amb" class="field" value="0"></div>
        <div class="row slide"><label for="diff">Diffuse</label><input type="range" aria-label="Diffuse slider" min="0" max="100" value="100"><input id="diff" class="field" value="1"></div>
        <h3>Edge Styling</h3>
        <button class="btn color split"><i class="swatch navy"></i>Edge Color</button>
        <h3>Backface Styling</h3>
        <div class="row double"><label for="back">Backface Representation</label><span class="combo"><select id="back"><option>Follow Frontface</option></select></span></div>
        <button class="btn color"><i class="swatch"></i>Backface Ambient Color</button>
      </div>
      <div class="scroll props-scroll"><svg><use href="#up"/></svg><i class="thumb"></i><svg><use href="#down"/></svg></div>
    </div>
  </aside>

  <section class="center">
    <div class="layout-tabs">
      <button class="ltab current"><svg><use href="#win"/></svg>Layout #1<svg><use href="#close"/></svg></button><button class="ltab add">+</button>
    </div>
    <div class="frame">
      <div class="viewbar">
        <button aria-label="Camera undo"><svg><use href="#cam-undo"/></svg></button>
        <button aria-label="Camera redo"><svg><use href="#cam-redo"/></svg></button>
        <span class="sep"></span>
        <button class="text">3D</button>
        <button aria-label="Adjust camera"><svg><use href="#camera"/></svg></button>
        <span class="sep"></span>
        <button aria-label="Add selection"><svg><use href="#plus-sel"/></svg></button>
        <button aria-label="Subtract selection"><svg><use href="#minus-sel"/></svg></button>
        <button aria-label="Toggle selection"><svg><use href="#toggle-sel"/></svg></button>
        <span class="sep"></span>
        <button aria-label="Select cells on"><svg><use href="#sel-cell"/></svg></button>
        <button aria-label="Select points on"><svg><use href="#sel-pt"/></svg></button>
        <button aria-label="Select cells through"><svg><use href="#fr-cell"/></svg></button>
        <button aria-label="Select points through"><svg><use href="#fr-pt"/></svg></button>
        <button aria-label="Select cells with polygon"><svg><use href="#poly-cell"/></svg></button>
        <button aria-label="Select points with polygon"><svg><use href="#poly-pt"/></svg></button>
        <button aria-label="Select block"><svg><use href="#sel-block"/></svg></button>
        <button aria-label="Interactive select cells"><svg><use href="#int-cell"/></svg></button>
        <button aria-label="Interactive select points"><svg><use href="#int-pt"/></svg></button>
        <button aria-label="Hover points"><svg><use href="#hov-pt"/></svg></button>
        <button aria-label="Hover cells"><svg><use href="#hov-cell"/></svg></button>
        <button aria-label="Clear selection"><svg><use href="#trash"/></svg></button>
        <strong>RenderView1</strong>
        <span class="viewcaps">
          <button aria-label="Split horizontally"><svg><use href="#split-h"/></svg></button>
          <button aria-label="Split vertically"><svg><use href="#split-v"/></svg></button>
          <button aria-label="Maximize"><svg><use href="#win"/></svg></button>
          <button aria-label="Undock"><svg><use href="#float"/></svg></button>
          <button aria-label="Close view"><svg><use href="#close"/></svg></button>
        </span>
      </div>
      <svg class="render" viewBox="531 172 794 815" role="img" aria-label="Velocity contours">
        <defs>
          <linearGradient id="main-line" gradientUnits="userSpaceOnUse" x1="0" y1="75" x2="0" y2="1490"><stop offset="0" stop-color="#ff9850"/><stop offset=".045" stop-color="#ff9850"/><stop offset=".055" stop-color="#7df03c"/><stop offset=".095" stop-color="#7df03c"/><stop offset=".1" stop-color="#4cee90"/><stop offset=".145" stop-color="#4cee90"/><stop offset=".155" stop-color="#40a8ff"/><stop offset=".195" stop-color="#40a8ff"/><stop offset=".2" stop-color="#2c2cf0"/><stop offset=".27" stop-color="#4050f0"/><stop offset=".32" stop-color="#38b0ff"/><stop offset=".42" stop-color="#48d0f8"/><stop offset=".65" stop-color="#68c8ff"/><stop offset=".8" stop-color="#4c88f8"/><stop offset=".9" stop-color="#6074ff"/><stop offset="1" stop-color="#2c2ce0"/></linearGradient>
          <linearGradient id="side-line" gradientUnits="userSpaceOnUse" x1="0" y1="75" x2="0" y2="345"><stop offset="0" stop-color="#58dc40"/><stop offset=".25" stop-color="#7ce850"/><stop offset=".28" stop-color="#48ece0"/><stop offset=".6" stop-color="#50eeb8"/><stop offset=".85" stop-color="#50eeb0"/><stop offset=".92" stop-color="#30c0ff"/><stop offset="1" stop-color="#30c0ff"/></linearGradient>
          <linearGradient id="corner-line" gradientUnits="userSpaceOnUse" x1="0" y1="75" x2="0" y2="240"><stop offset="0" stop-color="#48e088"/><stop offset=".4" stop-color="#50e080"/><stop offset=".6" stop-color="#50f0c0"/><stop offset="1" stop-color="#40f0dc"/></linearGradient>
          <linearGradient id="low-line" gradientUnits="userSpaceOnUse" x1="0" y1="915" x2="0" y2="1490"><stop offset="0" stop-color="#6878f8"/><stop offset=".5" stop-color="#4050e8"/><stop offset=".65" stop-color="#4c54f0"/><stop offset=".72" stop-color="#a8a0ff"/><stop offset="1" stop-color="#8c88ff"/></linearGradient>
          <linearGradient id="legend" x1="0" y1="1" x2="0" y2="0"><stop offset="0" stop-color="#00f"/><stop offset=".25" stop-color="#0ff"/><stop offset=".5" stop-color="#0f0"/><stop offset=".75" stop-color="#ff0"/><stop offset="1" stop-color="#f00"/></linearGradient>
        </defs>
        <g class="contours" transform="translate(620 280) scale(.3954 .3827)">
          <path stroke="url(#main-line)" d="M837 75L834 130L835 145L834 210L838 285L841 355L841 400L838 490L829 555L820 612L811 638L806 670L795 700L787 730L779 745L771 770L763 783L751 822L733 850L725 872L704 907L692 922L675 960L652 990L621 1040L603 1056L594 1070L586 1084L570 1108L544 1136L527 1172L514 1196L511 1205L508 1250L509 1280L518 1298L537 1345L553 1366L572 1385L590 1420L604 1458L612 1489"/>
          <path stroke="url(#side-line)" d="M279 75L282 125L280 145L279 200L270 216L261 244L233 268L225 281L208 287L182 307L160 312L135 318L93 322M1262 75L1258 145L1264 216L1282 245L1305 288L1330 309L1353 316L1395 339L1450 342L1465 345"/>
          <path stroke="url(#corner-line)" d="M116 75L111 87L93 102M170 75L164 95L147 132L110 163L93 167M209 75L207 125L199 145L193 177L160 196L150 205L93 217M1333 75L1336 88L1342 145L1395 215L1465 240M1371 75L1395 145L1465 186M1416 75L1465 136"/>
          <path stroke="url(#low-line)" d="M93 914L165 975L182 998L205 1040L222 1073L229 1093L264 1140L280 1185L286 1208L282 1262L277 1278L256 1310L236 1334L222 1356L205 1376L93 1489"/>
        </g>
        <path fill="#f03c2c" d="M665 308h2v2h-2zM686 308h2v2h-2zM702 308h2v2h-2zM729 308h2v2h-2zM950 308h2v2h-2zM1118 308h2v2h-2zM1146 308h2v2h-2zM1161 308h2v2h-2zM1179 308h2v2h-2z"/>
        <path fill="#2c2cd0" d="M656 629h2v2h-2zM656 849h3v2h-3zM861 849h2v2h-2z"/>
        <path fill="#24c8b0" d="M656 318h2v2h-2zM656 343h2v2h-2zM656 362h2v2h-2zM656 402h2v2h-2zM1198 331h2v2h-2zM1198 350h2v2h-2zM1198 371h2v2h-2zM1198 411h2v2h-2z"/>
        <path d="M1079 600h16v268h-16z" fill="url(#legend)"/>
        <path class="ticks" d="M1091 600.500h12M1091 654.500h12M1091 708.500h12M1091 761.500h12M1091 815.500h12M1091 868.500h12"/>
        <g class="legend-text"><text x="1110" y="604">1.0e+00</text><text x="1109" y="658">0.8</text><text x="1109" y="712">0.6</text><text x="1109" y="765">0.4</text><text x="1109" y="819">0.2</text><text x="1110" y="872">1.9e-04</text></g>
        <path d="M633.500 840v40" stroke="#f0f000" stroke-width="1.500"/><path d="M633.500 829l4 10h-8z" fill="#dcdc00" stroke="#84841c" stroke-width=".7"/><circle cx="633.500" cy="884.500" r="5" fill="#006000"/>
        <path d="M647 884.500h32" stroke="#ff3030"/><path d="M689 884.500l-10 4v-8z" fill="#d80000" stroke="#600"/>
      </svg>
    </div>
  </section>

  <aside class="dock right">
    <h2 class="title">Color Map Editor</h2>
    <div class="rform">
      <div class="searchrow">
        <input class="field" aria-label="Search color map" placeholder="Search ... (use Esc to clear text)">
        <button class="mini" aria-label="Advanced"><svg><use href="#gear"/></svg></button>
        <button class="mini checked" aria-label="Show legend"><svg><use href="#colorbar"/></svg></button>
        <button class="mini" aria-label="Edit legend"></button>
      </div>
      <p>Array Name: U</p>
      <label class="check"><input type="checkbox">Lock Data Range</label>
      <label class="check"><input type="checkbox">Interpret Values As Categories</label>
      <label class="check"><input type="checkbox">Rescale On Visibility Change</label>
      <h3>Mapping Data</h3>
      <svg class="transfer" viewBox="0 0 559 184" role="img" aria-label="Transfer function">
        <defs>
          <linearGradient id="ramp"><stop offset="0" stop-color="#fff"/><stop offset=".13" stop-color="#ecefff"/><stop offset=".25" stop-color="#ccffff"/><stop offset=".5" stop-color="#98ff94"/><stop offset=".75" stop-color="#ffff60"/><stop offset="1" stop-color="#ff3c3c"/></linearGradient>
          <linearGradient id="hue"><stop offset="0" stop-color="#00f"/><stop offset=".25" stop-color="#0ff"/><stop offset=".5" stop-color="#0f0"/><stop offset=".75" stop-color="#ff0"/><stop offset="1" stop-color="#f00"/></linearGradient>
        </defs>
        <path d="M8 136L529 37v99z" fill="url(#ramp)"/><path d="M8 136L529 37" stroke="#444450" stroke-width="2"/>
        <path d="M8 152h521v24H8z" fill="url(#hue)"/>
        <g stroke="#84847c" stroke-width="2"><circle cx="8" cy="136" r="5" fill="#7478ff"/><circle cx="8" cy="164" r="5" fill="#5060f8"/><circle cx="529" cy="37" r="5" fill="#ff4848"/><circle cx="529" cy="76" r="5" fill="#ff4848"/><circle cx="529" cy="164" r="5" fill="#ff3030"/></g>
        <g fill="none" stroke="#e8e4d8"><path d="M3 136a5 5 0 0 1 7-5M3 164a5 5 0 0 1 7-5M524 37a5 5 0 0 1 5-5M524 76a5 5 0 0 1 5-5M524 164a5 5 0 0 1 5-5"/></g>
      </svg>
      <div class="line data"><label for="data">Data:</label><input id="data" class="field" disabled></div>
      <label class="check loose"><input type="checkbox">Use log scale when mapping data to colors</label>
      <label class="check loose"><input type="checkbox">Enable opacity mapping for surfaces</label>
      <h3>Color Mapping Parameters</h3>
      <div class="row"><label for="space">Color Space</label><span class="combo"><select id="space"><option>HSV</option></select></span></div>
      <button class="btn color"><i class="swatch grey"></i>Nan Color</button>
      <h3>Color Discretization</h3>
      <label class="check"><input type="checkbox" checked>Discretize</label>
      <div class="row slide double"><label for="tab">Number Of Table Values</label><input type="range" aria-label="Table values slider" min="0" max="1000" value="248"><input id="tab" class="field" value="256"></div>
      <div class="line foot">
        <button class="mini wide" aria-label="Restore defaults"><svg><use href="#refresh"/></svg></button>
        <button class="mini wide" aria-label="Save as default for array"><svg viewBox="0 0 24 24"><use href="#folder-in" x="5" y="-1" width="16" height="16"/><path d="M1.500 14v8M22.500 14v8M2 18.500h20M8.500 16v5M15.500 16v5" stroke="#777"/></svg></button>
        <button class="mini wide" aria-label="Save as default"><svg><use href="#folder-in"/></svg></button>
        <button class="btn render-btn" disabled><svg><use href="#extract-grey"/></svg>Render Views</button>
      </div>
    </div>
  </aside>
</main>

<footer class="status"><button aria-label="Abort" disabled><svg><use href="#close"/></svg></button><div class="progress"></div></footer>
</body>
</html>
```
FILE: styles.css
```
:root {
  --bg: #f0f0f0;
  --btn: #e1e1e1;
  --edge: #adadad;
  --ink: #000;
  --accent: #0078d7;
}

* { box-sizing: border-box; }

body {
  margin: 0;
  height: 100vh;
  display: flex;
  flex-direction: column;
  overflow: hidden;
  background: var(--bg);
  color: var(--ink);
  font: 11px/13px "DejaVu Sans Condensed", "DejaVu Sans", sans-serif;
}

button, input, select { font: inherit; color: inherit; margin: 0; border-radius: 0; }
button { padding: 0; border: 0; background: none; }
svg { display: block; flex: none; }
.sprite { position: absolute; width: 0; height: 0; }

/* Menu bar */
.menubar {
  display: flex;
  gap: 17px;
  height: 25px;
  padding: 7px 0 0;
  background: #fff;
  font: 11px/15px "Noto Sans", sans-serif;
}
.menubar a { color: inherit; text-decoration: none; }

/* Toolbars */
.toolrow { display: flex; height: 34px; border-bottom: 1px solid #b0b0b0; }
.group { display: flex; align-items: center; padding-right: 1px; border-right: 1px solid #a8a8a8; }
.group.lead { padding-left: 2px; }
.group.wide { padding-left: 3px; }
.group.open { border-right: 0; }
.grip { width: 10px; height: 26px; border-left: 2px dotted #b4b4b4; margin: 0 -4px 0 4px; }
.tool { width: 31px; height: 30px; display: grid; place-items: center; position: relative; }
.tool svg { width: 24px; height: 24px; overflow: visible; }
.tool.on { background: #c0dcf3; border: 1px solid #90c8f6; }
.tool text { font: bold 10px "Liberation Sans", sans-serif; fill: #808080; }
.tool .deg { font-size: 9px; }
.tool.menu::after {
  content: "";
  position: absolute;
  right: 2px;
  bottom: 5px;
  border: 3px solid transparent;
  border-top-color: #000;
  border-bottom: 0;
}
.sep { flex: none; width: 1px; height: 23px; margin: 0 3px 0 2px; background: #c8c8c8; }
.group label { margin: 0 2px 0 0; }
.time { width: 133px; margin-right: 2px; }
.spin {
  display: grid;
  grid-template: 9px 9px / 1fr 13px;
  width: 31px;
  height: 20px;
  margin-right: 2px;
  border: 1px solid #7a7a7a;
  background: #fff;
}
.spin input { grid-row: 1 / 3; width: 100%; border: 0; padding: 0 0 0 2px; background: none; }
.spin button { background: #e8e8e8; border: 1px solid #b4b4b4; font-size: 5px; line-height: 7px; }

/* Shared controls */
.field {
  height: 20px;
  min-width: 0;
  padding: 1px 2px 0;
  border: 1px solid #7a7a7a;
  background: #fff;
}
.field:disabled { border-color: #ccc; background: var(--bg); color: #6d6d6d; }
.field::placeholder { color: #8a8a8a; opacity: 1; }

.combo { position: relative; display: flex; align-items: center; height: 20px; min-width: 0; background: var(--btn); border: 1px solid var(--edge); }
.combo.tall { height: 22px; }
.combo.focus { border-color: #8aa0b8; }
.combo select { flex: 1; min-width: 0; height: 100%; padding: 1px 22px 0 3px; border: 0; background: none; appearance: none; outline: 0; }
.combo::after {
  content: "";
  position: absolute;
  right: 5px;
  border: 4px solid transparent;
  border-top-color: #000;
  border-bottom: 0;
  pointer-events: none;
}
.lead-ico { width: 16px; height: 16px; margin: 0 -1px 0 4px; }
.combo.array { width: 156px; height: 22px; margin-right: 4px; }
.combo.comp { width: 69px; }
.combo.rep { width: 150px; }
.combo.comp select { padding-right: 18px; }

.btn {
  display: flex;
  align-items: center;
  justify-content: center;
  gap: 5px;
  height: 22px;
  background: var(--btn);
  border: 1px solid var(--edge);
}
.btn svg { width: 16px; height: 16px; }
.btn:disabled, .mini:disabled { background: #ccc; border-color: #bfbfbf; color: #838383; }

.mini { flex: none; display: grid; place-items: center; width: 21px; height: 20px; background: var(--btn); border: 1px solid var(--edge); }
.mini svg { width: 16px; height: 16px; }
.mini.wide { width: 26px; height: 22px; }
.mini.checked { background: #cce4f7; border-color: #005499; }

.check { display: flex; align-items: center; gap: 5px; height: 16px; }
.check.loose { height: 18px; }
.check input { appearance: none; display: grid; place-items: center; width: 13px; height: 13px; border: 1px solid #333; background: #fff; }
.check input:checked::before {
  content: "";
  width: 9px;
  height: 9px;
  background: #222;
  clip-path: polygon(0 50%, 10% 40%, 38% 68%, 90% 10%, 100% 20%, 38% 88%);
}

input[type="range"] { appearance: none; width: 100%; height: 21px; background: none; }
input[type="range"]::-webkit-slider-runnable-track { height: 4px; background: #e7eaea; border: 1px solid #d6d6d6; }
input[type="range"]::-webkit-slider-thumb { appearance: none; width: 10px; height: 21px; margin-top: -10px; background: var(--accent); }

/* Docks */
.workspace { flex: 1; min-height: 0; display: flex; padding-top: 1px; }
.dock { flex: none; display: flex; flex-direction: column; min-height: 0; }
.left { width: 523px; margin-right: 5px; }
.right { width: 539px; margin-left: 7px; overflow: hidden; }
.title {
  display: flex;
  align-items: center;
  justify-content: space-between;
  height: 20px;
  margin: 0;
  padding-top: 2px;
  border: 1px solid #b8b8b8;
  background: #dadada;
  font-size: inherit;
  font-weight: normal;
}
.left .title { border-left: 0; text-indent: -2px; flex: none; }
.right .title { margin-right: -2px; padding-left: 3px; flex: none; }
.caps { display: flex; gap: 7px; margin: -2px 4px 0 0; }
.caps svg { width: 9px; height: 9px; }

/* Pipeline tree */
.tree { flex: none; display: flex; height: 121px; margin-top: 1px; border: 1px solid #828790; border-left: 0; background: #fff; overflow: hidden; }
.tree ul { flex: 1; margin: -11px 0 0; padding: 0; list-style: none; }
.tree li { display: flex; align-items: center; height: 22px; }
.tree span { margin-left: 2px; padding: 2px 1px; }
.tree .selected { background: var(--accent); color: #fff; outline: 1px dotted #e08a3c; outline-offset: -1px; }
.eye { width: 14px; height: 11px; color: #8c8c8c; margin: 0 2px 0 -2px; }
.eye.active { color: #14203c; }
.branch { width: 38px; height: 22px; overflow: visible; position: relative; }
.branch.root { width: 20px; }
.node { width: 16px; height: 16px; }

.scroll { flex: none; display: flex; flex-direction: column; justify-content: space-between; align-items: center; background: var(--bg); }
.scroll svg { width: 9px; height: 9px; }
.thumb { width: 100%; background: #cdcdcd; }
.tree-scroll { width: 16px; padding: 4px 0; }
.tree-scroll .thumb { height: 77px; margin-top: 6px; }

.tabs { flex: none; display: flex; align-items: flex-end; height: 25px; border-bottom: 1px solid #a0a0a0; margin-bottom: 1px; }
.tab { height: 19px; padding: 0 9px; border: 1px solid #d9d9d9; border-bottom: 0; }
.tab.current { height: 21px; padding: 0 12px 0 4px; margin-bottom: -1px; border-left: 0; background: #fff; }

.actions { flex: none; display: grid; grid-template-columns: repeat(4, 1fr); gap: 4px; margin: 11px 10px 0 3px; }
.searchrow { flex: none; display: flex; gap: 3px; }
.searchrow .field { flex: 1; }
.left .searchrow { margin: 8px 10px 6px 2px; }

.props { flex: 1; min-height: 0; display: flex; margin: 0 10px 6px 2px; overflow: hidden; }
.form { flex: 1; display: flex; flex-direction: column; gap: 5px; padding-top: 4px; margin-right: 1px; }
.form > *, .rform > * { flex: none; }
.props-scroll { width: 15px; padding: 6px 0 4px; }
.props-scroll .thumb { height: 151px; margin-top: -98px; }

h3 { margin: 3px 0 0; padding-top: 2px; font-size: inherit; font-weight: bold; line-height: 12px; border-bottom: 1px solid #a0a0a0; box-shadow: 0 1px #fff; }
.line { display: flex; align-items: center; }
.head { gap: 6px; padding-right: 1px; }
.section { flex: 1; display: flex; align-items: center; gap: 8px; height: 26px; padding-left: 9px; border: 1px solid #828790; font-weight: bold; }
.section svg { width: 14px; height: 8px; }
.edit { flex: 1; margin-left: 1px; }
.coloring { gap: 4px; margin-top: 1px; }
.coloring .combo { flex: 1; }
.checks { display: grid; gap: 5px; padding: 1px 0; }

.row { display: grid; grid-template-columns: 105px 1fr; align-items: start; }
.row:not(.slide) + .row { margin-top: -1px; }
.row label { padding-top: 1px; }
.row.slide { grid-template-columns: 105px 192px 1fr; align-items: end; }
.row.slide label { align-self: start; }
.row.slide .field { margin-left: 6px; }
.row.double .combo { margin-top: 2px; }
.row.double label { padding: 0; }
.row.slide.double { align-items: center; }

.btn.color { height: 20px; justify-content: flex-start; gap: 4px; margin: 1px; padding-left: 4px; }
.swatch { width: 16px; height: 16px; border: 1px solid #444; border-radius: 50%; background: #fff; }
.swatch.navy { background: #000080; }
.swatch.grey { background: #808080; }
.btn.split { margin-top: 2px; }
.btn.split::after {
  content: "";
  width: 13px;
  height: 16px;
  margin-left: auto;
  border-left: 1px solid #888;
  background: conic-gradient(from -45deg at 50% 100%, #000 90deg, transparent 0) 2px 6px / 8px 4px no-repeat;
}

/* Render view */
.center { flex: 1; min-width: 0; display: flex; flex-direction: column; }
.layout-tabs { display: flex; align-items: flex-end; height: 19px; flex: none; }
.ltab { display: flex; align-items: center; justify-content: center; gap: 4px; height: 18px; border: 1px solid #d9d9d9; border-bottom: 0; }
.ltab.current { width: 102px; height: 20px; margin-bottom: -1px; padding-right: 4px; background: #fff; position: relative; font-size: 12px; gap: 3px; }
.ltab svg { width: 9px; height: 9px; }
.ltab.add { width: 29px; font-size: 13px; }
.frame { flex: 1; min-height: 0; display: flex; flex-direction: column; border: 1px solid #dcdcdc; background: #fff; }
.viewbar { flex: none; display: flex; align-items: center; height: 22px; padding-right: 1px; }
.viewbar > button { width: 19px; height: 19px; display: grid; place-items: center; }
.viewbar > button svg { width: 14px; height: 14px; }
.viewbar .sep { height: 12px; }
.viewbar .text { color: #222; }
.viewbar strong { margin-left: auto; text-decoration: underline; font-size: 11px; }
.viewcaps { display: flex; gap: 3px; margin-left: 12px; }
.viewcaps button { display: grid; place-items: center; width: 17px; height: 16px; background: var(--btn); border: 1px solid var(--edge); }
.viewcaps svg { width: 9px; height: 9px; }
.render { flex: 1; min-height: 0; width: 100%; border: 2px solid #0000ff; }
.contours path { fill: none; vector-effect: non-scaling-stroke; }
.ticks { stroke: #000080; }
.legend-text { font: 16px Lato, "Liberation Sans", sans-serif; fill: #000080; }

/* Color map editor */
.rform { display: flex; flex-direction: column; gap: 5px; margin: 11px -29px 0 9px; }
.rform .searchrow { gap: 4px; }
.rform p { margin: 2px 0; }
.transfer { width: 100%; background: #fff; }
.data { gap: 7px; margin-top: 1px; }
.data .field { flex: 1; }
.rform .row { grid-template-columns: 85px 1fr; }
.rform .row.slide { grid-template-columns: 85px 235px 1fr; }
.foot { gap: 4px; padding: 1px 30px 0 1px; }
.render-btn { width: 91px; margin-left: auto; gap: 4px; }

/* Status bar */
.status { flex: none; display: flex; justify-content: flex-end; align-items: flex-end; height: 16px; overflow: hidden; }
.status button { display: grid; place-items: center; width: 17px; height: 9px; margin-right: 1px; background: #ccc; border: 1px solid #bfbfbf; border-bottom: 0; }
.status svg { width: 9px; height: 9px; opacity: .3; }
.progress { flex: 0 0 48%; height: 11px; border: 1px solid #bcbcbc; border-width: 1px 0 0 1px; background: #e6e6e6; }
```
